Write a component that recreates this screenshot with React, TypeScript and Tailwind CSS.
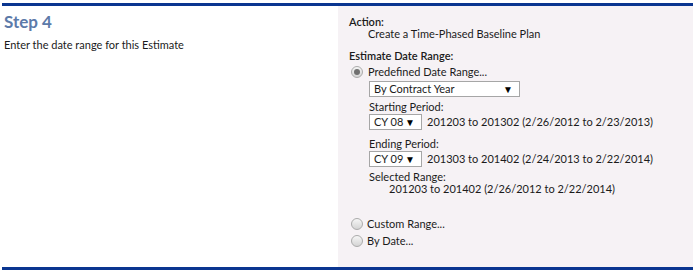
import React from "react";

function Radio({ checked }: { checked?: boolean }) {
  return (
    <span className="inline-flex h-[12px] w-[12px] shrink-0 items-center justify-center rounded-full border border-[#ababab] bg-gradient-to-b from-[#f6f6f6] to-[#d4d4d4]">
      {checked && <span className="h-[6px] w-[6px] rounded-full bg-[#707070]" />}
    </span>
  );
}

function Select({ label, width }: { label: string; width: string }) {
  return (
    <div className={`flex h-[16px] shrink-0 items-center justify-between border border-[#a6a6a6] bg-white pl-[4px] pr-[6px] ${width}`}>
      <span>{label}</span>
      <span className="text-[10px] leading-none text-black">▼</span>
    </div>
  );
}

export default function App() {
  return (
    <div className="h-[273px] w-[696px] bg-white pt-[3px] pl-[2px] text-[11px] leading-[12px] text-[#1b1b1b] font-['Lato','Open_Sans',sans-serif]">
      <div className="flex h-[267px] w-[691px] flex-col">
        <div className="h-[3px] shrink-0 bg-[#0a3590]" />
        <div className="flex min-h-0 flex-1">
          <div className="w-[336px] pl-[2px] pt-[6px]">
            <h2 className="text-[17px] font-bold leading-[20px] text-[#5c7aa9]">Step 4</h2>
            <p className="mt-[7px]">Enter the date range for this Estimate</p>
          </div>
          <div className="flex-1 bg-[#f6f2f5] pl-[11px] pt-[10px]">
            <div className="font-semibold">Action:</div>
            <div className="pl-[19px]">Create a Time-Phased Baseline Plan</div>
            <div className="mt-[10px] font-semibold">Estimate Date Range:</div>
            <div className="mt-[4px] flex items-center gap-[5px] pl-[2px]">
              <Radio checked />
              <span>Predefined Date Range...</span>
            </div>
            <div className="pl-[20px]">
              <div className="mt-[3px]">
                <Select label="By Contract Year" width="w-[151px]" />
              </div>
              <div className="mt-[4px]">Starting Period:</div>
              <div className="mt-[1px] flex items-center gap-[5px]">
                <Select label="CY 08" width="w-[53px]" />
                <span>201203 to 201302 (2/26/2012 to 2/23/2013)</span>
              </div>
              <div className="mt-[8px]">Ending Period:</div>
              <div className="mt-[1px] flex items-center gap-[5px]">
                <Select label="CY 09" width="w-[53px]" />
                <span>201303 to 201402 (2/24/2013 to 2/22/2014)</span>
              </div>
              <div className="mt-[4px]">Selected Range:</div>
              <div className="pl-[20px]">201203 to 201402 (2/26/2012 to 2/22/2014)</div>
            </div>
            <div className="mt-[23px] flex items-center gap-[4px] pl-[2px]">
              <Radio />
              <span>Custom Range...</span>
            </div>
            <div className="mt-[5px] flex items-center gap-[4px] pl-[2px]">
              <Radio />
              <span>By Date...</span>
            </div>
          </div>
        </div>
        <div className="h-[3px] shrink-0 bg-[#0a3590]" />
      </div>
    </div>
  );
}
